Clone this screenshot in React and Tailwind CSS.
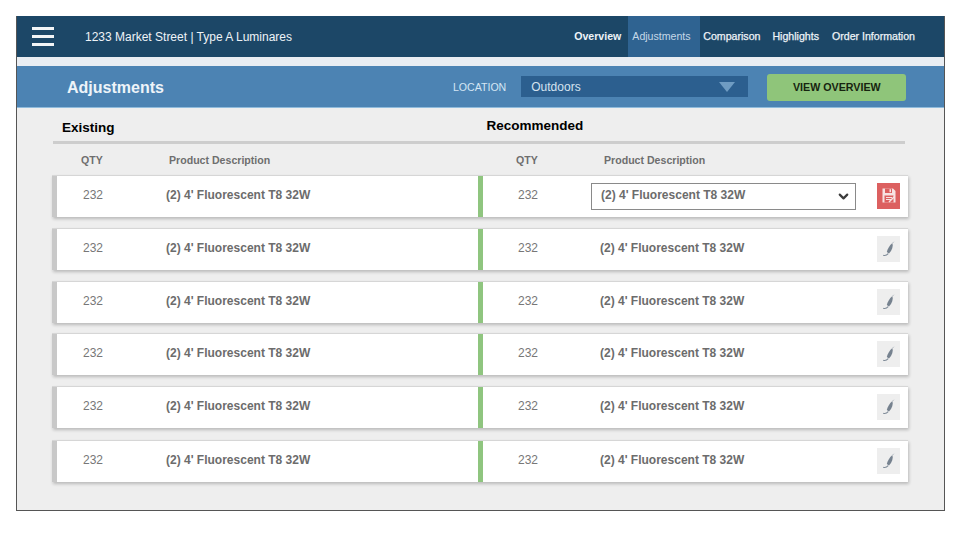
import { ChevronDown } from 'lucide-react'

const navItems = ['Comparison', 'Highlights']
const rows = [
  { id: 1, editing: true, top: 'mt-0' },
  { id: 2, editing: false, top: 'mt-[11px]' },
  { id: 3, editing: false, top: 'mt-[11px]' },
  { id: 4, editing: false, top: 'mt-[10px]' },
  { id: 5, editing: false, top: 'mt-[11px]' },
  { id: 6, editing: false, top: 'mt-[12px]' },
]

const SaveIcon = () => (
  <svg width="14" height="15" viewBox="0 0 14 15">
    <path d="M0.5 0.5H11L13.5 3V14.5H0.5Z" fill="#f7e3e3" />
    <rect x="3" y="0.5" width="7" height="4.5" fill="#dc6060" />
    <rect x="7.5" y="1.2" width="1.5" height="3" fill="#f7e3e3" />
    <rect x="2.5" y="7.5" width="9" height="7" fill="#dc6060" />
    <path d="M4 9.5H10M4 11.5H10" stroke="#f7e3e3" strokeWidth="1" />
    <path d="M7 14L12.5 8.5" stroke="#f7e3e3" strokeWidth="1.4" />
  </svg>
)

const PenIcon = () => (
  <svg width="14" height="16" viewBox="0 0 14 16">
    <path d="M4.8 11C5.4 8.2 7.4 4.6 10.4 2C11.4 5.2 10.2 9.4 7 12.4Z" fill="#76828f" />
    <path d="M1.2 14.2C3 14.8 4.8 14.2 6.2 12.6" fill="none" stroke="#7f8b98" strokeWidth="1.1" />
    <path d="M10.8 1.8L11.8 0.8" stroke="#a9b1ba" strokeWidth="1" />
  </svg>
)

const Row = ({ editing, top }) => (
  <div className={`flex h-[42px] w-[856px] -ml-px bg-white border-t border-[#d6d6d6] shadow-[1px_2px_3px_rgba(0,0,0,0.22)] text-[12px] text-[#6c6c6c] ${top}`}>
    <div className="flex w-[426px] items-center border-l-[5px] border-[#c8c8c8] pb-[2px]">
      <span className="mb-[2px] w-[72px] text-center text-[#777777]">232</span>
      <span className="mb-[2px] ml-[37px] font-bold">(2) 4' Fluorescent T8 32W</span>
    </div>
    <div className="flex flex-1 items-center border-l-[5px] border-[#8fc57f] pb-[2px]">
      <span className="mb-[2px] w-[90px] text-center text-[#777777]">232</span>
      {editing ? (
        <div className="ml-[18px] mt-[2px] flex h-[27px] w-[265px] items-center justify-between border border-[#8a8a8a] pl-[9px] pr-[4px]">
          <span className="mb-[4px] font-bold">(2) 4' Fluorescent T8 32W</span>
          <ChevronDown size={15} strokeWidth={3.5} className="text-[#3c3c3c]" />
        </div>
      ) : (
        <span className="mb-[2px] ml-[27px] w-[256px] font-bold">(2) 4' Fluorescent T8 32W</span>
      )}
      {editing ? (
        <button className="ml-[21px] flex h-[26px] w-[23px] items-center justify-center bg-[#dc6060]">
          <SaveIcon />
        </button>
      ) : (
        <button className="ml-[21px] flex h-[26px] w-[23px] items-center justify-center bg-[#eeeeee]">
          <PenIcon />
        </button>
      )}
    </div>
  </div>
)

export default function App() {
  return (
    <div className="h-[540px] w-[960px] bg-white pl-4 pt-4 font-['Liberation_Sans',Arial,sans-serif]">
      <div className="h-[495px] w-[929px] border-x border-b border-[#555555] bg-[#eeeeee]">
        <header className="flex h-[41px] items-center bg-[#1c4767] text-[#eef3f7]">
          <div className="ml-[15px] flex w-[22px] flex-col gap-[5px]">
            <span className="h-[3px] bg-[#f2f5f7]"></span>
            <span className="h-[3px] bg-[#f2f5f7]"></span>
            <span className="h-[3px] bg-[#f2f5f7]"></span>
          </div>
          <span className="ml-[31px] text-[12px]">1233 Market Street | Type A Luminares</span>
          <nav className="ml-auto mr-[29px] flex h-full items-center text-[10.6px]">
            <a className="mr-[7px] font-bold">Overview</a>
            <a className="mr-[3px] flex h-full w-[72px] items-center pl-[4px] bg-[#2f6391] text-[#c5d8e8]">Adjustments</a>
            {navItems.map((item) => (
              <a key={item} className="mr-[12px] [-webkit-text-stroke:0.25px]">{item}</a>
            ))}
            <a className="ml-px [-webkit-text-stroke:0.25px]">Order Information</a>
          </nav>
        </header>
        <div className="h-[9px] bg-[#e9edf2]"></div>
        <section className="flex h-[42px] items-center border-b border-[#8fbbdc] bg-[#4c83b3]">
          <h1 className="ml-[50px] mt-[3px] text-[16px] font-bold text-[#eef4f9]">Adjustments</h1>
          <span className="ml-[289px] mt-[3px] text-[10.6px] text-[#d5e6f4]">LOCATION</span>
          <div className="ml-[15px] flex h-[21px] w-[227px] items-center justify-between bg-[#2c5f8f] pl-[10px] pr-[13px] text-[12px] text-[#d5e3ef]">
            <span>Outdoors</span>
            <span className="h-0 w-0 border-x-[8px] border-t-[10px] border-x-transparent border-t-[#6f9cc2]"></span>
          </div>
          <button className="ml-[19px] mt-[2px] h-[27px] w-[139px] rounded-[3px] bg-[#8fc57a] text-[10.7px] font-bold text-[#17240f]">VIEW OVERVIEW</button>
        </section>
        <main className="pl-[36px]">
          <div className="flex h-[36px] w-[852px] border-b-[3px] border-[#cdcdcd] font-bold text-black">
            <span className="ml-[9px] mt-[10px] text-[13.5px]">Existing</span>
            <span className="ml-[372px] mt-[8px] text-[13.5px]">Recommended</span>
          </div>
          <div className="flex h-[31px] items-center pt-[3px] text-[10.6px] font-bold text-[#6e6e6e]">
            <span className="ml-[28px] w-[88px]">QTY</span>
            <span className="w-[347px]">Product Description</span>
            <span className="w-[88px]">QTY</span>
            <span>Product Description</span>
          </div>
          {rows.map((row) => (
            <Row key={row.id} editing={row.editing} top={row.top} />
          ))}
        </main>
      </div>
    </div>
  )
}
